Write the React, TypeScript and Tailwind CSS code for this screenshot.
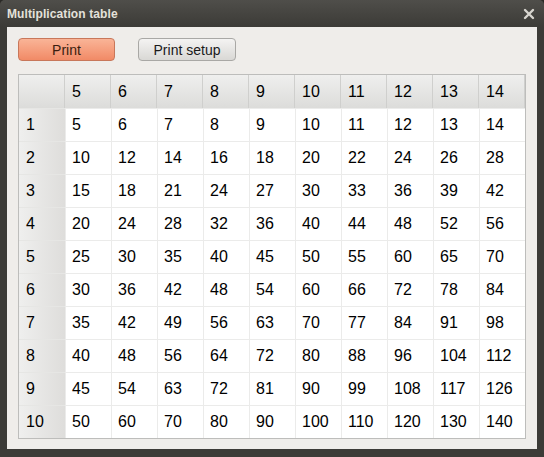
import React from "react";

const cols = [5, 6, 7, 8, 9, 10, 11, 12, 13, 14];
const rows = [1, 2, 3, 4, 5, 6, 7, 8, 9, 10];

export default function App() {
  return (
    <div
      className="w-[544px] h-[457px] bg-[#2b2a27] overflow-hidden"
      style={{ fontFamily: '"Liberation Sans", Arial, sans-serif' }}
    >
      <div className="w-full h-full flex flex-col rounded-t-[5px] bg-[#3c3b37] overflow-hidden">
        {/* title bar */}
        <div className="h-[27px] flex items-center justify-between pl-[7px] pr-[9px] bg-gradient-to-b from-[#4f4e4a] to-[#3c3b37]">
          <span className="text-[12px] font-bold text-[#e4e1da] tracking-[0.1px]">
            Multiplication table
          </span>
          <svg width="12" height="12" viewBox="0 0 12 12" className="mt-[1px]">
            <path
              d="M2 2 L10 10 M10 2 L2 10"
              stroke="#d8d5cf"
              strokeWidth="2.4"
              strokeLinecap="round"
            />
          </svg>
        </div>
        {/* body */}
        <div className="flex-1 mx-[7px] mb-[8px] bg-[#efedea] flex flex-col pl-[11px] pt-[11px]">
          <div className="flex gap-[23px] h-[23px]">
            <button className="w-[97px] h-[23px] rounded-[4px] border border-[#c8775a] bg-gradient-to-b from-[#f9b497] to-[#f18a66] text-[14px] text-[#3a1d10] leading-none">
              Print
            </button>
            <button className="w-[98px] h-[23px] rounded-[4px] border border-[#a9a8a5] bg-gradient-to-b from-[#f4f3f2] to-[#d9d8d5] text-[14px] text-[#1a1a1a] leading-none">
              Print setup
            </button>
          </div>
          <div className="mt-[13px] w-[508px] border border-[#bdbdbb] bg-white">
            <div className="grid grid-cols-[46px_repeat(10,46px)] auto-rows-[33px] text-[16px] text-black">
              <div className="bg-gradient-to-b from-[#efefee] to-[#dcdcda] border-r border-[#cfcfcd]" />
              {cols.map((c) => (
                <div
                  key={"h" + c}
                  className="bg-gradient-to-b from-[#efefee] to-[#dcdcda] border-r border-[#cfcfcd] last:border-r-0 flex items-center pl-[7px]"
                >
                  {c}
                </div>
              ))}
              {rows.map((r) => (
                <React.Fragment key={r}>
                  <div className="bg-gradient-to-r from-[#efefee] to-[#dedddb] border-t border-[#e6e6e4] flex items-center pl-[7px]">
                    {r}
                  </div>
                  {cols.map((c) => (
                    <div
                      key={r + "-" + c}
                      className="border-t border-l border-[#ebebea] flex items-center pl-[6px]"
                    >
                      {r * c}
                    </div>
                  ))}
                </React.Fragment>
              ))}
            </div>
          </div>
        </div>
      </div>
    </div>
  );
}
